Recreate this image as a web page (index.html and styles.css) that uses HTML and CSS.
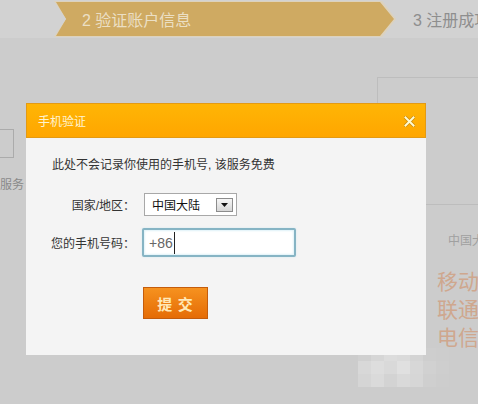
FILE: index.html
```html
<!DOCTYPE html>
<html lang="zh-CN">
<head>
<meta charset="utf-8">
<title>手机验证</title>
<link rel="stylesheet" href="styles.css">
</head>
<body>
<div class="steps">
  <div class="step-wrap"><div class="step-active">2 验证账户信息</div></div>
  <div class="step-next">3 注册成功</div>
</div>
<div class="content">
  <div class="left-col">
    <div class="left-box"></div>
    <div class="left-text">服务</div>
  </div>
  <div class="mid-col"></div>
  <div class="right-col">
    <div class="right-box"></div>
    <div class="right-small">中国大陆</div>
    <div class="right-big">移动<br>联通<br>电信</div>
  </div>
</div>

<div class="watermark">
  <i style="background:#d0d0d0"></i><i style="background:#d6d6d6"></i><i style="background:#dcdcdc"></i><i style="background:#dadada"></i><i style="background:#d4d4d4"></i><i style="background:#cecece"></i><i style="background:#cdcdcd"></i>
  <i style="background:#d8d8d8"></i><i style="background:#dddddd"></i><i style="background:#d9d9d9"></i><i style="background:#e0e0e0"></i><i style="background:#d7d7d7"></i><i style="background:#d1d1d1"></i><i style="background:#cecece"></i>
  <i style="background:#d5d5d5"></i><i style="background:#dadada"></i><i style="background:#d3d3d3"></i><i style="background:#d9d9d9"></i><i style="background:#d6d6d6"></i><i style="background:#cfcfcf"></i><i style="background:#cdcdcd"></i>
</div>

<div class="dialog">
  <div class="dlg-head">
    <span class="dlg-title">手机验证</span>
    <svg class="dlg-close" width="11" height="11" viewBox="0 0 11 11"><path d="M1.5 1.5 L9.5 9.5 M9.5 1.5 L1.5 9.5" stroke="#c98a10" stroke-width="3.4" stroke-linecap="square"/><path d="M1.5 1.5 L9.5 9.5 M9.5 1.5 L1.5 9.5" stroke="#fffbd0" stroke-width="2" stroke-linecap="square"/></svg>
  </div>
  <div class="dlg-body">
    <p class="dlg-note">此处不会记录你使用的手机号, 该服务免费</p>
    <div class="form">
      <label class="lbl">国家/地区：</label>
      <div class="select"><span class="select-text">中国大陆</span><span class="select-btn"><svg width="7" height="4" viewBox="0 0 7 4"><path d="M0 0 H7 L3.5 4 Z" fill="#111"/></svg></span></div>
      <label class="lbl">您的手机号码：</label>
      <div class="phone"><span class="phone-text">+86</span><span class="caret"></span></div>
    </div>
    <button class="submit">提 交</button>
  </div>
</div>
</body>
</html>
```

FILE: styles.css
```css
html, body {
  margin: 0;
  padding: 0;
}
body {
  width: 478px;
  height: 404px;
  overflow: hidden;
  position: relative;
  background: #cccccc;
  font-family: "Liberation Sans", "Noto Sans CJK SC", sans-serif;
}

/* step bar */
.steps {
  display: flex;
  align-items: center;
  height: 38px;
  background: #d2d2d2;
  white-space: nowrap;
  overflow: hidden;
}
.step-wrap {
  flex: none;
  margin-left: 54px;
  width: 342px;
  height: 36px;
  padding: 1px 2px;
  box-sizing: border-box;
  background: #ddd2bc;
  clip-path: polygon(0 0, 328px 0, 342px 50%, 328px 100%, 0 100%, 12px 50%);
}
.step-active {
  height: 100%;
  display: flex;
  align-items: center;
  padding-left: 26px;
  background: #cfaa62;
  color: #ebdfc4;
  font-size: 16px;
  clip-path: polygon(0 0, 324px 0, 338px 50%, 324px 100%, 0 100%, 10px 50%);
}
.step-next {
  flex: none;
  margin-left: 17px;
  color: #8e8e8e;
  font-size: 16px;
}

/* background page */
.content {
  display: flex;
  height: 366px;
}
.left-col {
  width: 26px;
  flex: none;
  overflow: hidden;
}
.left-box {
  margin: 91px 0 0 -8px;
  width: 20px;
  height: 27px;
  border: 1px solid #ababab;
}
.left-text {
  margin-top: 19px;
  font-size: 12px;
  line-height: 16px;
  color: #8a8a8a;
}
.mid-col {
  flex: 1;
}
.right-col {
  width: 101px;
  flex: none;
  overflow: hidden;
  white-space: nowrap;
}
.right-box {
  margin-top: 39px;
  height: 126px;
  width: 120px;
  border: 1px solid #bdbdbd;
  border-right: none;
}
.right-small {
  margin-top: 28px;
  padding-left: 71px;
  font-size: 12px;
  line-height: 16px;
  color: #a0a0a0;
}
.right-big {
  margin-top: 19px;
  padding-left: 60px;
  font-size: 21px;
  line-height: 28px;
  color: #cfa78e;
}

/* watermark mosaic */
.watermark {
  position: absolute;
  left: 358px;
  top: 348px;
  display: grid;
  grid-template-columns: repeat(7, 13px);
  grid-auto-rows: 13px;
}
.watermark i {
  display: block;
}

/* dialog */
.dialog {
  position: absolute;
  left: 26px;
  top: 103px;
  width: 400px;
}
.dlg-head {
  height: 35px;
  box-sizing: border-box;
  display: flex;
  align-items: center;
  justify-content: space-between;
  padding: 0 10px 0 11px;
  background: linear-gradient(#ffb505, #ffa600);
  border: 1px solid #e39a14;
}
.dlg-title {
  font-size: 12px;
  color: #fff4d2;
}
.dlg-close {
  display: block;
  margin-top: 1px;
}
.dlg-body {
  background: #f4f4f4;
  padding: 19px 0 36px;
}
.dlg-note {
  margin: 0;
  padding-left: 26px;
  font-size: 12px;
  line-height: 16px;
  color: #333;
}
.form {
  margin-top: 20px;
  display: grid;
  grid-template-columns: 109px 1fr;
  grid-template-rows: 23px 29px;
  row-gap: 12px;
  align-items: center;
}
.lbl {
  text-align: right;
  font-size: 12px;
  color: #333;
  white-space: nowrap;
}
.select {
  margin-left: 9px;
  width: 93px;
  height: 23px;
  box-sizing: border-box;
  border: 1px solid #a8a8a8;
  background: #fff;
  display: flex;
  align-items: center;
  justify-content: space-between;
  padding: 0 3px 0 7px;
}
.select-text {
  font-size: 12px;
  color: #111;
}
.select-btn {
  width: 17px;
  height: 14px;
  box-sizing: border-box;
  border: 1px solid #8c8c8c;
  background: linear-gradient(#f6f6f6, #d6d6d6);
  display: flex;
  align-items: center;
  justify-content: center;
}
.select-btn svg {
  display: block;
}
.phone {
  margin-left: 7px;
  width: 154px;
  height: 29px;
  box-sizing: border-box;
  border: 2px solid #86b4c4;
  border-radius: 2px;
  background: #fff;
  box-shadow: inset 0 0 2px 1px #dff2f8, 0 0 2px #cfe6ee;
  display: flex;
  align-items: center;
  padding-left: 5px;
}
.phone-text {
  font-size: 14px;
  color: #666;
}
.caret {
  width: 1px;
  height: 22px;
  margin-left: 1px;
  background: #222;
}
.submit {
  display: block;
  margin: 30px 0 0 117px;
  width: 65px;
  height: 32px;
  padding: 0;
  border: 1px solid #c45c0c;
  background: linear-gradient(#f6921f, #e56c06);
  color: #ffe9b8;
  font-family: "Noto Sans CJK SC", sans-serif;
  font-size: 15px;
  font-weight: bold;
  letter-spacing: 1px;
}
```
